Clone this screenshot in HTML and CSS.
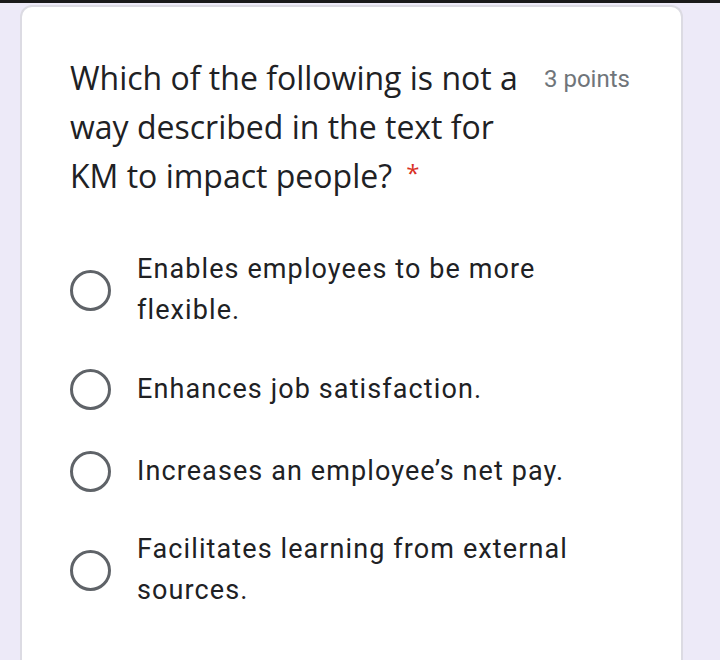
FILE: index.html
```html
<!DOCTYPE html>
<html>
<head>
<meta charset="utf-8">
<link rel="stylesheet" href="styles.css">
</head>
<body>
<div class="topline"></div>
<div class="page">
  <div class="card">
    <div class="header">
      <div class="question">Which of the following is not a<br>way described in the text for<br>KM to impact people? <span class="req">*</span></div>
      <div class="points">3 points</div>
    </div>
    <div class="options">
      <div class="option"><span class="radio-wrap"><span class="radio"></span></span><div class="label">Enables employees to be more<br>flexible.</div></div>
      <div class="option"><span class="radio-wrap"><span class="radio"></span></span><div class="label">Enhances job satisfaction.</div></div>
      <div class="option"><span class="radio-wrap"><span class="radio"></span></span><div class="label">Increases an employee’s net pay.</div></div>
      <div class="option"><span class="radio-wrap"><span class="radio"></span></span><div class="label">Facilitates learning from external<br>sources.</div></div>
    </div>
  </div>
</div>
</body>
</html>
```
FILE: styles.css
```css
html, body {
  margin: 0;
  padding: 0;
  height: 100%;
  overflow: hidden;
}
body {
  background: #edeaf8;
  font-family: Roboto, "Liberation Sans", sans-serif;
  color: #202124;
  display: flex;
  flex-direction: column;
}
.topline {
  height: 3px;
  background: #1a1a1a;
}
.page {
  flex: 1;
  padding: 2px 37px 0 20px;
  display: flex;
  flex-direction: column;
}
.card {
  flex: 1;
  background: #fff;
  border: 2px solid #dcdbe3;
  border-bottom: none;
  border-radius: 12px 12px 0 0;
  padding: 46px 48px 0 48px;
}
.header {
  display: flex;
  align-items: flex-start;
}
.question {
  font-family: "Open Sans", sans-serif;
  font-size: 32px;
  line-height: 49px;
  height: 147px;
  width: 474px;
  color: #202124;
}
.req {
  color: #d93025;
  font-size: 24px;
  line-height: 0;
  vertical-align: 6px;
  margin-left: 6px;
}
.points {
  font-family: Roboto, sans-serif;
  font-size: 24px;
  color: #70757a;
  line-height: 49px;
  margin-top: 2px;
}
.options {
  display: flex;
  flex-direction: column;
  gap: 34px;
  margin-top: 49px;
}
.option {
  display: flex;
  align-items: center;
  gap: 26px;
  min-height: 48px;
}
.radio-wrap {
  flex: 0 0 auto;
  display: flex;
  align-items: center;
  justify-content: center;
  height: 48px;
}
.radio {
  width: 35px;
  height: 35px;
  border: 3px solid #5f6368;
  border-radius: 50%;
}
.label {
  font-size: 27px;
  letter-spacing: 1.1px;
  line-height: 41px;
  color: #202124;
}
```
